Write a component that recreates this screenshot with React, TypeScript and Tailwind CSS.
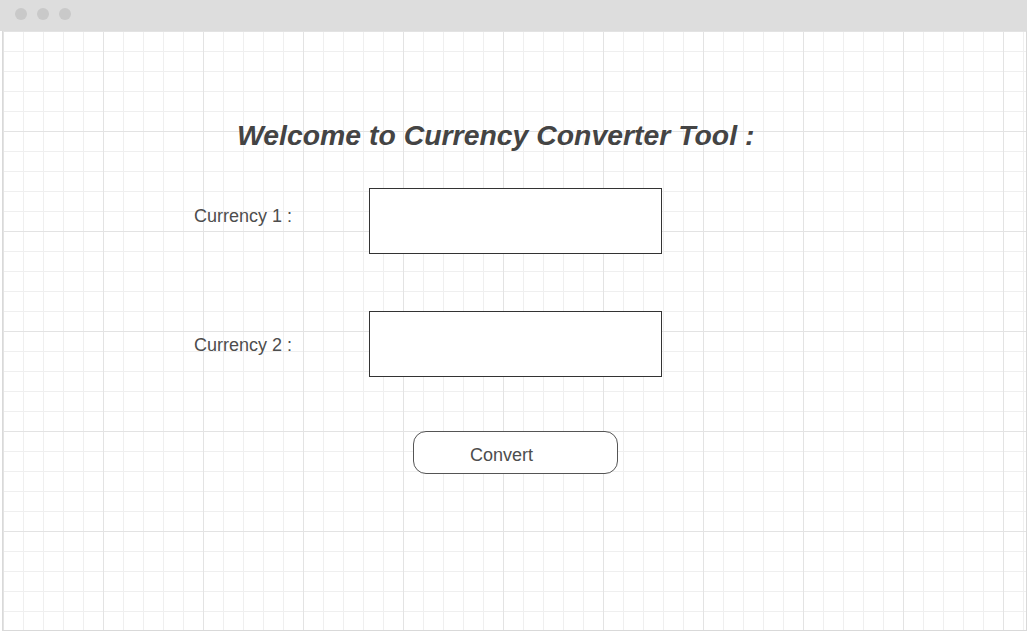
import React from "react";

const App = () => {
    return (
        <main className="w-[1028px] h-[632px] bg-white overflow-hidden font-['Liberation_Sans',Arial,sans-serif]">
            {/* Browser window frame */}
            <div className="w-[1027px] h-[631px] flex flex-col">
                {/* Title bar */}
                <div className="h-[31px] bg-[#dddddd] flex items-start pt-[8px] pl-[15px] gap-[10px] shrink-0">
                    <span className="w-[12px] h-[12px] rounded-full bg-[#c9c9c9]" />
                    <span className="w-[12px] h-[12px] rounded-full bg-[#c9c9c9]" />
                    <span className="w-[12px] h-[12px] rounded-full bg-[#c9c9c9]" />
                </div>

                {/* Grid canvas */}
                <div className="ml-[2px] flex-1 border-l border-r border-b border-[#d9d9d9] bg-white bg-[linear-gradient(#e3e3e3_1px,transparent_1px),linear-gradient(90deg,#e3e3e3_1px,transparent_1px),linear-gradient(#efefef_1px,transparent_1px),linear-gradient(90deg,#efefef_1px,transparent_1px)] bg-[size:100px_100px,100px_100px,20px_20px,20px_20px]">
                    <h1 className="mt-[88px] ml-[234px] text-[28.4px] leading-[32px] font-bold italic text-[#444444] whitespace-nowrap">
                        Welcome to Currency Converter Tool :
                    </h1>

                    {/* Currency 1 */}
                    <div className="mt-[37px] flex items-start">
                        <label className="ml-[191px] mt-[17px] w-[175px] text-[18px] leading-[22px] text-[#4d4d4d]">
                            Currency 1 :
                        </label>
                        <input className="w-[293px] h-[66px] border border-[#333333] bg-white outline-none" />
                    </div>

                    {/* Currency 2 */}
                    <div className="mt-[57px] flex items-start">
                        <label className="ml-[191px] mt-[23px] w-[175px] text-[18px] leading-[22px] text-[#4d4d4d]">
                            Currency 2 :
                        </label>
                        <input className="w-[293px] h-[66px] border border-[#333333] bg-white outline-none" />
                    </div>

                    <button className="mt-[54px] ml-[410px] w-[205px] h-[43px] border border-[#555555] rounded-[13px] bg-white text-left pl-[56px] pt-[4px] text-[18px] leading-[22px] text-[#4d4d4d] block">
                        Convert
                    </button>
                </div>
            </div>
        </main>
    );
};

export default App;
